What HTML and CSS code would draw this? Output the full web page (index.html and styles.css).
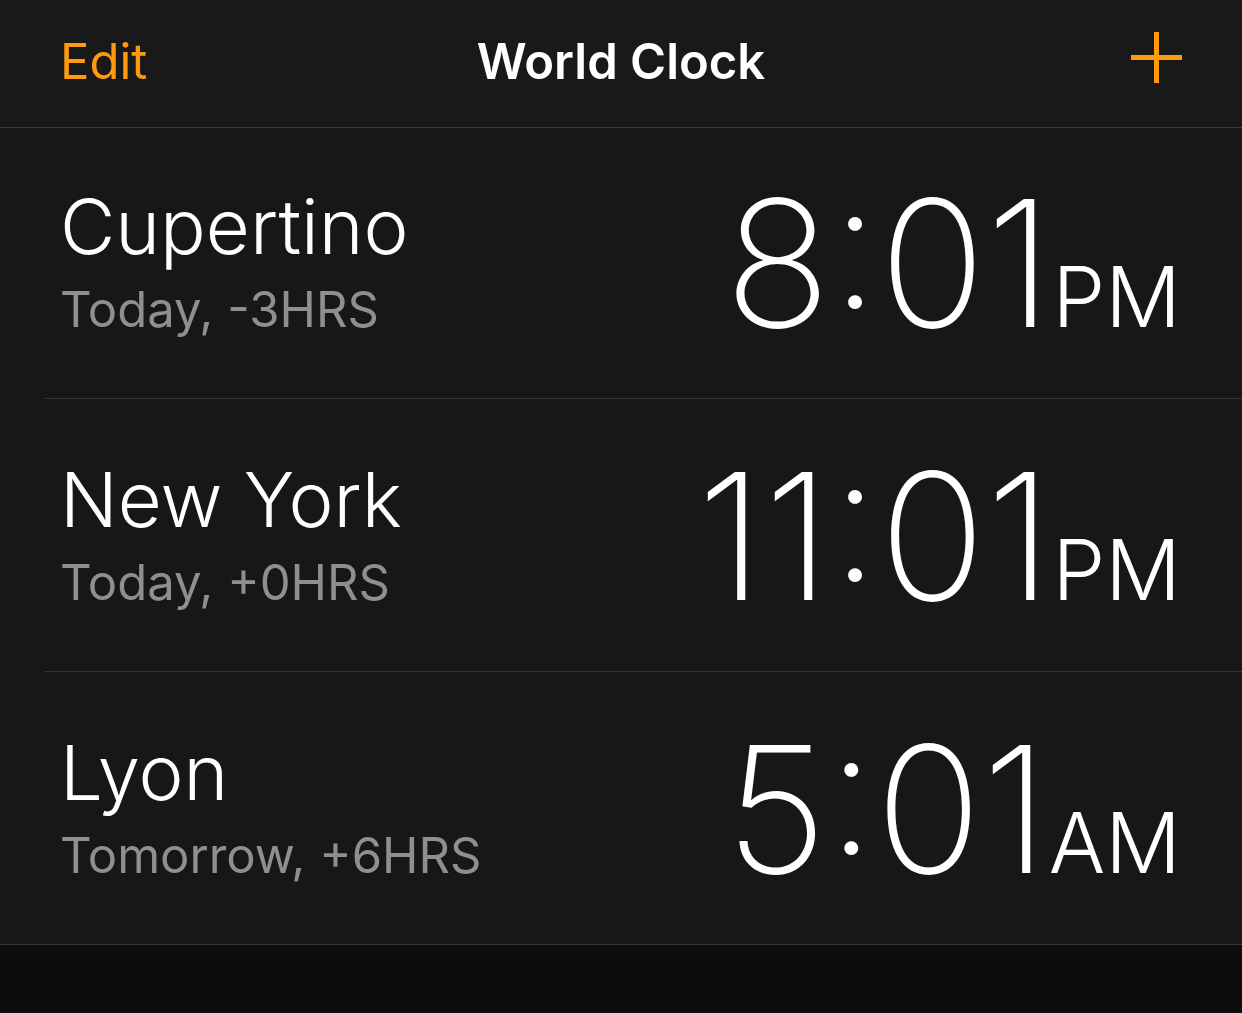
FILE: index.html
```html
<!DOCTYPE html>
<html lang="en">
<head>
<meta charset="utf-8">
<meta name="viewport" content="width=device-width, initial-scale=1">
<title>World Clock</title>
<link rel="stylesheet" href="styles.css">
</head>
<body>
<header class="navbar">
  <button class="edit" type="button">Edit</button>
  <h1 class="title">World Clock</h1>
  <button class="add" type="button" aria-label="Add city">
    <svg class="plus" viewBox="0 0 51 51" aria-hidden="true"><path d="M0 25.5H51M25.5 0V51" stroke="currentColor" stroke-width="5"/></svg>
  </button>
</header>
<main>
  <ul class="clocks">
    <li class="clock">
      <div class="place"><h2 class="city">Cupertino</h2><p class="offset">Today, -3HRS</p></div>
      <time class="time">8:01<span class="period">PM</span></time>
    </li>
    <li class="clock">
      <div class="place"><h2 class="city">New York</h2><p class="offset">Today, +0HRS</p></div>
      <time class="time">11:01<span class="period">PM</span></time>
    </li>
    <li class="clock">
      <div class="place"><h2 class="city">Lyon</h2><p class="offset">Tomorrow, +6HRS</p></div>
      <time class="time">5:01<span class="period">AM</span></time>
    </li>
  </ul>
</main>
</body>
</html>
```
FILE: styles.css
```css
* { box-sizing: border-box; margin: 0; padding: 0; }
body {
  min-height: 100vh;
  background: #0d0d0d;
  color: #fff;
  font-family: Inter, "Liberation Sans", sans-serif;
}
button {
  border: 0;
  background: none;
  color: #ff9a0f;
  font: inherit;
  cursor: pointer;
}
.navbar {
  display: grid;
  grid-template-columns: 1fr auto 1fr;
  align-items: start;
  padding: 32px 60px 35px;
  border-bottom: 1px solid #3a3a3a;
  background: #191919;
}
.edit { justify-self: start; font-size: 49px; line-height: 60px; }
.title { font-size: 49px; font-weight: 600; line-height: 60px; }
.add { justify-self: end; }
.plus { display: block; width: 51px; height: 51px; }
.clocks {
  list-style: none;
  border-bottom: 1px solid #3a3a3a;
  background: #171717;
}
.clock {
  display: flex;
  justify-content: space-between;
  align-items: last baseline;
  margin-left: 45px;
  padding: 50px 61px 52px 15px;
}
.clock + .clock { padding-top: 52px; border-top: 1px solid #363636; }
.city { font-size: 76px; font-weight: 300; line-height: 96px; }
.offset { color: #8e8e93; font-size: 49px; line-height: 72px; }
.time { font-size: 176px; font-weight: 200; line-height: 128px; white-space: nowrap; }
.period { font-size: 84px; font-weight: 300; line-height: 84px; }
```
